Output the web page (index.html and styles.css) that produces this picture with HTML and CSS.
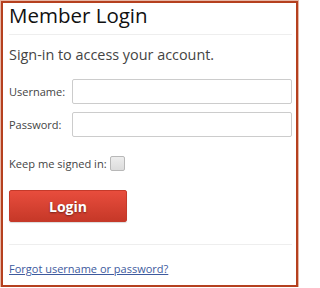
FILE: index.html
```html
<!DOCTYPE html>
<html>
<head>
<meta charset="utf-8">
<link rel="stylesheet" href="styles.css">
</head>
<body>
<div class="box">
  <h1 class="title">Member Login</h1>
  <p class="lead">Sign-in to access your account.</p>
  <form class="form">
    <div class="row">
      <label class="label">Username:</label>
      <input class="input" type="text">
    </div>
    <div class="row">
      <label class="label">Password:</label>
      <input class="input" type="password">
    </div>
    <div class="keep">
      <span class="keep-text">Keep me signed in:</span>
      <span class="check"></span>
    </div>
    <button class="btn" type="button">Login</button>
  </form>
  <div class="footer">
    <a class="link" href="#">Forgot username or password?</a>
  </div>
</div>
</body>
</html>
```
FILE: styles.css
```css
html, body {
  margin: 0;
  padding: 0;
  background: #fff;
}
body {
  font-family: "Open Sans", "DejaVu Sans", sans-serif;
  color: #333;
}
.box {
  margin: 1px 0 0 1px;
  width: 297px;
  height: 286px;
  box-sizing: border-box;
  border: 2px solid #b5401f;
  box-shadow: 0 0 0 1px #e7b7a6;
  padding: 0 4px 0 6px;
  background: #fff;
}
.title {
  margin: 0;
  font-size: 20.5px;
  line-height: 25px;
  font-weight: 400;
  color: #111;
  padding-bottom: 6px;
  border-bottom: 1px solid #eeeeee;
}
.lead {
  margin: 10px 0 0 0;
  font-size: 14.4px;
  line-height: 20px;
  color: #444;
}
.form {
  margin-top: 14px;
  display: flex;
  flex-direction: column;
}
.row {
  display: flex;
  align-items: center;
  margin-bottom: 8px;
}
.label {
  width: 63px;
  font-size: 11px;
  color: #444;
}
.input {
  width: 220px;
  height: 25px;
  box-sizing: border-box;
  border: 1px solid #cccccc;
  border-radius: 2px;
  margin: 0;
  padding: 2px 4px;
  background: #fff;
}
.keep {
  display: flex;
  align-items: center;
  margin-top: 11px;
  font-size: 11.1px;
  color: #444;
}
.check {
  width: 13px;
  height: 13px;
  margin-left: 3px;
  border: 1px solid #b8b8b8;
  border-radius: 2px;
  background: linear-gradient(#ededed, #dcdcdc);
}
.btn {
  margin-top: 19px;
  width: 118px;
  height: 32px;
  border: 1px solid #c53a2a;
  border-radius: 2px;
  background: linear-gradient(#e84d3d, #c63828);
  color: #fff;
  font-family: "Open Sans", "DejaVu Sans", sans-serif;
  font-size: 14px;
  font-weight: 700;
  text-shadow: 0 1px 2px rgba(0,0,0,0.45);
  box-shadow: 0 1px 1px rgba(0,0,0,0.15);
  padding: 0;
  cursor: pointer;
}
.footer {
  margin-top: 22px;
  border-top: 1px solid #eeeeee;
  padding-top: 11px;
}
.link {
  font-size: 11px;
  line-height: 15px;
  color: #3d5a9e;
  text-decoration: underline;
}
```
